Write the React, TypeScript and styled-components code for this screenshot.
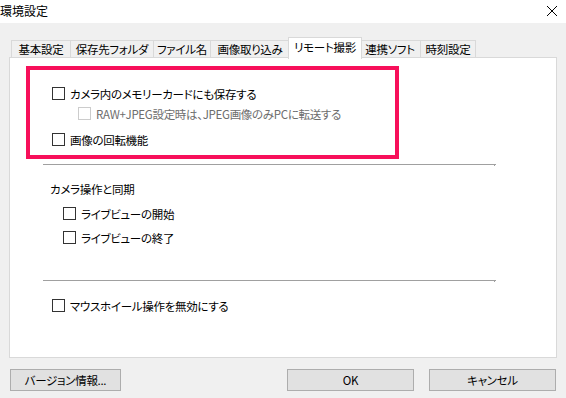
import styled, { createGlobalStyle } from "styled-components";

const GlobalStyle = createGlobalStyle`
  html, body {
    margin: 0;
    padding: 0;
    background: #f0f0f0;
  }
  body {
    font-family: "Noto Sans CJK JP", "Noto Sans", sans-serif;
    font-size: 11.5px;
    letter-spacing: -0.3px;
    font-feature-settings: "palt";
    color: #000;
  }
`;

const Window = styled.div`
  width: 566px;
  height: 398px;
  background: #f0f0f0;
  display: flex;
  flex-direction: column;
  overflow: hidden;
`;

const TitleBar = styled.div`
  height: 23px;
  background: #fff;
  display: flex;
  align-items: center;
  justify-content: space-between;
  padding: 0 8px 0 0;
`;

const Title = styled.span`
  font-size: 12px;
  letter-spacing: 0;
  line-height: 14px;
  margin-top: -1px;
`;

const CloseButton = styled.div`
  width: 12px;
  height: 12px;
  display: flex;
  margin-top: -2px;
`;

const Body = styled.div`
  padding: 14px 9px 0 9px;
  display: flex;
  flex-direction: column;
`;

const TabStrip = styled.div`
  display: flex;
  align-items: flex-end;
  height: 21px;
  padding-left: 2px;
  position: relative;
  z-index: 1;
`;

const Tab = styled.div<{ $active?: boolean; $width: number }>`
  box-sizing: border-box;
  width: ${(p) => p.$width}px;
  height: ${(p) => (p.$active ? 22 : 18)}px;
  margin: ${(p) => (p.$active ? "0 -2px -1px -2px" : "0 0 0 -1px")};
  background: ${(p) => (p.$active ? "#fff" : "#f0f0f0")};
  border: 1px solid #d9d9d9;
  border-bottom: ${(p) => (p.$active ? "none" : "1px solid #d9d9d9")};
  display: flex;
  align-items: center;
  justify-content: center;
  line-height: 14px;
  white-space: nowrap;
  position: relative;
  z-index: ${(p) => (p.$active ? 2 : 1)};
  padding-bottom: ${(p) => (p.$active ? 3 : 0)}px;
  &:first-child {
    margin-left: 0;
  }
`;

const Panel = styled.div`
  box-sizing: border-box;
  height: 301px;
  margin-top: -1px;
  background: #fff;
  border: 1px solid #d9d9d9;
  display: flex;
  flex-direction: column;
`;

const Highlight = styled.div`
  box-sizing: border-box;
  width: 373px;
  height: 93px;
  margin: 8px 0 0 16px;
  border: 4px solid #f7105a;
  padding: 17px 0 0 22px;
  display: flex;
  flex-direction: column;
`;

const Row = styled.label<{ $indent?: number; $top?: number; $disabled?: boolean }>`
  display: flex;
  align-items: center;
  height: 13px;
  margin-left: ${(p) => p.$indent ?? 0}px;
  margin-top: ${(p) => p.$top ?? 0}px;
  color: ${(p) => (p.$disabled ? "#6d6d6d" : "#000")};
  white-space: nowrap;
  line-height: 14px;
`;

const Box = styled.span<{ $disabled?: boolean }>`
  box-sizing: border-box;
  flex: none;
  width: 13px;
  height: 13px;
  border: 1px solid ${(p) => (p.$disabled ? "#cccccc" : "#333333")};
  background: #fff;
  margin-right: 5px;
`;

const Separator = styled.div<{ $top: number }>`
  width: 453px;
  height: 1px;
  margin: ${(p) => p.$top}px 0 0 33px;
  background: #a0a0a0;
  position: relative;
  &::after {
    content: "";
    position: absolute;
    right: 1px;
    top: 1px;
    width: 1px;
    height: 1px;
    background: #a0a0a0;
  }
`;

const GroupLabel = styled.div`
  margin: 17px 0 0 40px;
  line-height: 14px;
`;

const ButtonRow = styled.div`
  display: flex;
  margin-top: 11px;
  padding: 0 1px;
`;

const Button = styled.button<{ $width: number; $gap?: number }>`
  box-sizing: border-box;
  width: ${(p) => p.$width}px;
  height: 22px;
  margin-left: ${(p) => p.$gap ?? 0}px;
  background: #e1e1e1;
  border: 1px solid #adadad;
  font-family: inherit;
  font-size: inherit;
  letter-spacing: inherit;
  font-feature-settings: "palt";
  color: #000;
  padding: 0;
  line-height: 14px;
`;

const Spacer = styled.div`
  flex: 1;
`;

const tabs = [
  { label: "基本設定", width: 60 },
  { label: "保存先フォルダ", width: 84 },
  { label: "ファイル名", width: 58 },
  { label: "画像取り込み", width: 80 },
  { label: "リモート撮影", width: 74, active: true },
  { label: "連携ソフト", width: 62 },
  { label: "時刻設定", width: 56 },
];

export default function App() {
  return (
    <>
      <GlobalStyle />
      <Window>
        <TitleBar>
          <Title>環境設定</Title>
          <CloseButton>
            <svg width="12" height="12" viewBox="0 0 12 12">
              <path d="M1 1 L11 11 M11 1 L1 11" stroke="#000" strokeWidth="1" />
            </svg>
          </CloseButton>
        </TitleBar>
        <Body>
          <TabStrip>
            {tabs.map((t) => (
              <Tab key={t.label} $active={t.active} $width={t.width}>
                {t.label}
              </Tab>
            ))}
          </TabStrip>
          <Panel>
            <Highlight>
              <Row>
                <Box />
                カメラ内のメモリーカードにも保存する
              </Row>
              <Row $indent={26} $top={7} $disabled>
                <Box $disabled />
                RAW+JPEG設定時は、JPEG画像のみPCに転送する
              </Row>
              <Row $top={13}>
                <Box />
                画像の回転機能
              </Row>
            </Highlight>
            <Separator $top={5} />
            <GroupLabel>カメラ操作と同期</GroupLabel>
            <Row $indent={53} $top={11}>
              <Box />
              ライブビューの開始
            </Row>
            <Row $indent={53} $top={11}>
              <Box />
              ライブビューの終了
            </Row>
            <Separator $top={36} />
            <Row $indent={42} $top={18}>
              <Box />
              マウスホイール操作を無効にする
            </Row>
          </Panel>
          <ButtonRow>
            <Button $width={111}>バージョン情報...</Button>
            <Spacer />
            <Button $width={127}>OK</Button>
            <Button $width={127} $gap={15}>
              キャンセル
            </Button>
          </ButtonRow>
        </Body>
      </Window>
    </>
  );
}
